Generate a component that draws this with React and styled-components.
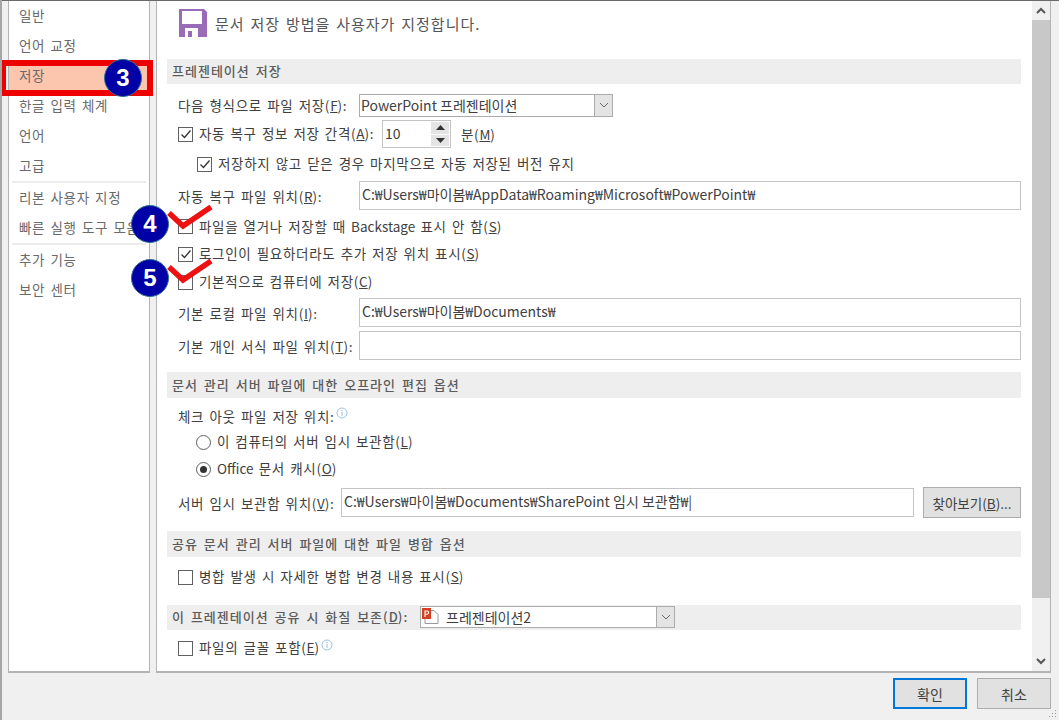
import React from 'react';
import styled, { createGlobalStyle } from 'styled-components';

const GlobalStyle = createGlobalStyle`
  html, body {
    margin: 0;
    padding: 0;
    background: #f0f0f0;
  }
  * {
    box-sizing: border-box;
  }
`;

const sideItems = [
  { label: '일반' },
  { label: '언어 교정' },
  { label: '저장', active: true },
  { label: '한글 입력 체계' },
  { label: '언어' },
  { label: '고급', divider: true },
  { label: '리본 사용자 지정' },
  { label: '빠른 실행 도구 모음', divider: true },
  { label: '추가 기능' },
  { label: '보안 센터' },
];

function Check() {
  return (
    <svg width="12" height="12" viewBox="0 0 12 12">
      <path d="M1.5 6.5 L4.5 9.5 L10.5 2.5" fill="none" stroke="#333" strokeWidth="1.3" />
    </svg>
  );
}

function Chevron({ up }) {
  return (
    <svg width="10" height="7" viewBox="0 0 10 7">
      <path
        d={up ? 'M1 6 L5 2 L9 6' : 'M1 1 L5 5 L9 1'}
        fill="none"
        stroke="#555"
        strokeWidth="2"
      />
    </svg>
  );
}

function SmallChevron() {
  return (
    <svg width="10" height="6" viewBox="0 0 10 6">
      <path d="M1 1 L5 5 L9 1" fill="none" stroke="#666" strokeWidth="1" />
    </svg>
  );
}

function Triangle({ up }) {
  return (
    <svg width="9" height="5" viewBox="0 0 9 5">
      <path d={up ? 'M0 5 L4.5 0 L9 5 Z' : 'M0 0 L4.5 5 L9 0 Z'} fill="#333" />
    </svg>
  );
}

function Info() {
  return (
    <InfoMark viewBox="0 0 12 12" width="12" height="12">
      <circle cx="6" cy="6" r="5" fill="none" stroke="#9cc3e6" strokeWidth="1" />
      <path d="M6 5 V9 M6 3 V4" stroke="#9cc3e6" strokeWidth="1" />
    </InfoMark>
  );
}

function DiskIcon() {
  return (
    <svg width="28" height="28" viewBox="0 0 28 28">
      <path d="M0 0 H25 L28 3 V28 H0 Z" fill="#9a6cb8" />
      <rect x="3" y="2" width="20" height="13" fill="#fff" />
      <rect x="6" y="19" width="13" height="9" fill="#fff" />
      <rect x="9" y="22" width="4" height="6" fill="#9a6cb8" />
    </svg>
  );
}

function PptIcon() {
  return (
    <svg width="17" height="17" viewBox="0 0 17 17">
      <path d="M3 2.5 H12 L16 6.5 V15.5 H3 Z" fill="#fff" stroke="#999" strokeWidth="1" />
      <rect x="0" y="0" width="9" height="11" fill="#d2401f" />
      <path d="M3 9 V3 H5 a1.5 1.5 0 0 1 0 3.2 H3" fill="none" stroke="#fff" strokeWidth="1.1" />
    </svg>
  );
}

function RedCheck({ top }) {
  return (
    <CheckMark $top={top} width="46" height="26" viewBox="0 0 46 26">
      <path d="M2 8 L16 21 L44 2" fill="none" stroke="#ee1111" strokeWidth="5.5" />
    </CheckMark>
  );
}

function Checkbox({ checked }) {
  return <Box>{checked && <Check />}</Box>;
}

function Key({ children }) {
  return <Under>{children}</Under>;
}

export default function App() {
  return (
    <Page>
      <GlobalStyle />
      <TopLine />
      <Panels>
        <SideList>
          {sideItems.map((item) => (
            <React.Fragment key={item.label}>
              <SideItem $active={item.active}>{item.label}</SideItem>
              {item.divider && <SideDivider />}
            </React.Fragment>
          ))}
        </SideList>

        <MainPanel>
          <Content>
            <Header>
              <DiskIcon />
              <HeaderText>문서 저장 방법을 사용자가 지정합니다.</HeaderText>
            </Header>

            <Section $top={0} $h={25}>프레젠테이션 저장</Section>
            <Group $top={8}>
              <Row $h={26}>
                <Label $w={181}>다음 형식으로 파일 저장(<Key>F</Key>):</Label>
                <Select $w={254}>
                  <SelectValue>PowerPoint 프레젠테이션</SelectValue>
                  <SelectArrow><SmallChevron /></SelectArrow>
                </Select>
              </Row>
              <Row $h={32}>
                <Checkbox checked />
                <CheckText $w={183}>자동 복구 정보 저장 간격(<Key>A</Key>):</CheckText>
                <Spin>
                  <SpinValue>10</SpinValue>
                  <SpinButtons>
                    <SpinButton><Triangle up /></SpinButton>
                    <SpinButton><Triangle /></SpinButton>
                  </SpinButtons>
                </Spin>
                <Minutes>분(<Key>M</Key>)</Minutes>
              </Row>
              <Row $h={28} $indent={19}>
                <Checkbox checked />
                <CheckText>저장하지 않고 닫은 경우 마지막으로 자동 저장된 버전 유지</CheckText>
              </Row>
              <Row $h={35}>
                <Label $w={181}>자동 복구 파일 위치(<Key>R</Key>):</Label>
                <Input>C:₩Users₩마이봄₩AppData₩Roaming₩Microsoft₩PowerPoint₩</Input>
              </Row>
              <Row $h={27}>
                <Checkbox />
                <CheckText>파일을 열거나 저장할 때 <Latin>Backstage</Latin> 표시 안 함(<Key>S</Key>)</CheckText>
              </Row>
              <Row $h={28}>
                <Checkbox checked />
                <CheckText>로그인이 필요하더라도 추가 저장 위치 표시(<Key>S</Key>)</CheckText>
              </Row>
              <Row $h={28}>
                <Checkbox />
                <CheckText>기본적으로 컴퓨터에 저장(<Key>C</Key>)</CheckText>
              </Row>
              <Row $h={33}>
                <Label $w={181}>기본 로컬 파일 위치(<Key>I</Key>):</Label>
                <Input>C:₩Users₩마이봄₩Documents₩</Input>
              </Row>
              <Row $h={33}>
                <Label $w={181}>기본 개인 서식 파일 위치(<Key>T</Key>):</Label>
                <Input />
              </Row>
            </Group>

            <Section $top={10} $h={26}>문서 관리 서버 파일에 대한 오프라인 편집 옵션</Section>
            <Group $top={5}>
              <Row $h={26}>
                <Label>체크 아웃 파일 저장 위치:</Label>
                <Info />
              </Row>
              <Row $h={26} $indent={18}>
                <Radio />
                <CheckText>이 컴퓨터의 서버 임시 보관함(<Key>L</Key>)</CheckText>
              </Row>
              <Row $h={28} $indent={18}>
                <Radio $on />
                <CheckText><Latin>Office</Latin> 문서 캐시(<Key>O</Key>)</CheckText>
              </Row>
              <Row $h={33} $top={3}>
                <Label $w={163}>서버 임시 보관함 위치(<Key>V</Key>):</Label>
                <Input>C:₩Users₩마이봄₩Documents₩SharePoint 임시 보관함₩|</Input>
                <BrowseButton>찾아보기(<Key>B</Key>)...</BrowseButton>
              </Row>
            </Group>

            <Section $top={12} $h={26}>공유 문서 관리 서버 파일에 대한 파일 병합 옵션</Section>
            <Group $top={6}>
              <Row $h={28}>
                <Checkbox />
                <CheckText>병합 발생 시 자세한 병합 변경 내용 표시(<Key>S</Key>)</CheckText>
              </Row>
            </Group>

            <Section $top={14} $h={25}>
              <SectionLabel>이 프레젠테이션 공유 시 화질 보존(<Key>D</Key>):</SectionLabel>
              <Select $w={255} $h={22}>
                <PptIcon />
                <SelectValue $gap={7}>프레젠테이션2</SelectValue>
                <SelectArrow><SmallChevron /></SelectArrow>
              </Select>
            </Section>
            <Group $top={4}>
              <Row $h={28}>
                <Checkbox />
                <CheckText>파일의 글꼴 포함(<Key>E</Key>)</CheckText>
                <Info />
              </Row>
            </Group>
          </Content>

          <ScrollBar>
            <ScrollArrow><Chevron up /></ScrollArrow>
            <ScrollThumb />
            <ScrollTrack />
            <ScrollArrow><Chevron /></ScrollArrow>
          </ScrollBar>
        </MainPanel>
      </Panels>

      <Footer>
        <DialogButton $primary>확인</DialogButton>
        <DialogButton>취소</DialogButton>
      </Footer>

      <RedFrame />
      <Badge $x={104} $y={59}>3</Badge>
      <Badge $x={131} $y={205}>4</Badge>
      <Badge $x={131} $y={259}>5</Badge>
      <RedCheck top={205} />
      <RedCheck top={259} />
      <Grip width="9" height="9" viewBox="0 0 9 9">
        <path
          d="M7 1 h1 v1 h-1 Z M4 4 h1 v1 h-1 Z M7 4 h1 v1 h-1 Z M1 7 h1 v1 h-1 Z M4 7 h1 v1 h-1 Z M7 7 h1 v1 h-1 Z"
          fill="#9a9a9a"
        />
      </Grip>
    </Page>
  );
}

const font = `"Noto Sans CJK KR", "Noto Sans", sans-serif`;

const Page = styled.div`
  position: relative;
  width: 1059px;
  height: 720px;
  overflow: hidden;
  background: #f0f0f0;
  border-left: 2px solid #a6a6a6;
  font-family: ${font};
  font-size: 13.5px;
  color: #404040;
`;

const TopLine = styled.div`
  height: 1px;
  background: #6a6a6a;
`;

const Panels = styled.div`
  display: flex;
  gap: 6px;
  height: 672px;
  padding-left: 6px;
  padding-right: 8px;
`;

const SideList = styled.div`
  width: 142px;
  flex: none;
  background: #fff;
  border: 1px solid #b4b4b4;
  border-top: none;
  border-bottom-width: 2px;
  overflow: hidden;
`;

const SideItem = styled.div`
  height: 30px;
  display: flex;
  align-items: center;
  padding: 0 0 3px 10px;
  white-space: nowrap;
  font-size: 13.5px;
  letter-spacing: 0.7px;
  word-spacing: 1.5px;
  color: #6a6a6a;
  background: ${(p) => (p.$active ? '#fcc6ae' : 'transparent')};
`;

const SideDivider = styled.div`
  height: 2px;
  margin: 0 3px;
  background: #ececec;
`;

const MainPanel = styled.div`
  flex: 1;
  display: flex;
  background: #fff;
  border: 1px solid #b4b4b4;
  border-top: none;
  border-bottom-width: 2px;
`;

const Content = styled.div`
  flex: 1;
  min-width: 0;
  padding: 0 11px 0 10px;
  overflow: hidden;
`;

const Header = styled.div`
  height: 59px;
  margin-top: -1px;
  display: flex;
  align-items: flex-start;
  padding: 9px 0 0 12px;
`;

const HeaderText = styled.div`
  margin: 4px 0 0 8px;
  font-size: 15px;
  letter-spacing: 1px;
  word-spacing: 1.5px;
  color: #555;
`;

const Section = styled.div`
  display: flex;
  align-items: center;
  height: ${(p) => p.$h}px;
  margin-top: ${(p) => p.$top}px;
  padding: 0 0 2px 5px;
  background: #eeeeee;
  font-size: 13px;
  font-weight: 500;
  letter-spacing: 1px;
  word-spacing: 2px;
  color: #5c5c5c;
`;

const SectionLabel = styled.span`
  width: 248px;
  flex: none;
  white-space: nowrap;
`;

const Group = styled.div`
  margin-top: ${(p) => p.$top}px;
  padding-left: 11px;
`;

const Row = styled.div`
  display: flex;
  align-items: center;
  height: ${(p) => p.$h}px;
  margin-top: ${(p) => p.$top || 0}px;
  padding-left: ${(p) => p.$indent || 0}px;
`;

const Label = styled.span`
  flex: none;
  white-space: nowrap;
  letter-spacing: 0.7px;
  word-spacing: 1.5px;
  ${(p) => (p.$w ? `width: ${p.$w}px;` : '')}
`;

const CheckText = styled.span`
  flex: none;
  margin-left: 6px;
  padding-bottom: 2px;
  white-space: nowrap;
  letter-spacing: 0.7px;
  word-spacing: 1.5px;
  ${(p) => (p.$w ? `width: ${p.$w}px;` : '')}
`;

const Latin = styled.span`
  letter-spacing: 0;
`;

const Under = styled.span`
  letter-spacing: 0;
  text-decoration: underline;
`;

const Box = styled.span`
  flex: none;
  width: 15px;
  height: 15px;
  display: flex;
  align-items: center;
  justify-content: center;
  background: #fff;
  border: 1px solid #606060;
`;

const Radio = styled.span`
  flex: none;
  width: 15px;
  height: 15px;
  display: flex;
  align-items: center;
  justify-content: center;
  border: 1px solid #606060;
  border-radius: 50%;

  &::after {
    content: '';
    display: ${(p) => (p.$on ? 'block' : 'none')};
    width: 7px;
    height: 7px;
    border-radius: 50%;
    background: #333;
  }
`;

const Select = styled.div`
  display: flex;
  align-items: center;
  width: ${(p) => p.$w}px;
  height: ${(p) => p.$h || 23}px;
  background: #fff;
  border: 1px solid #ababab;
  padding-left: 1px;
`;

const SelectValue = styled.span`
  flex: 1;
  margin-left: ${(p) => p.$gap || 0}px;
  white-space: nowrap;
  font-size: 14px;
  font-weight: 400;
  letter-spacing: 0;
  word-spacing: 0;
  color: #404040;
`;

const SelectArrow = styled.span`
  flex: none;
  width: 18px;
  height: 100%;
  display: flex;
  align-items: center;
  justify-content: center;
  background: #e4e4e4;
  border-left: 1px solid #ababab;
`;

const Spin = styled.div`
  display: flex;
  flex: none;
  width: 69px;
  height: 28px;
  padding: 1px;
  background: #fff;
  border: 1px solid #c4c4c4;
`;

const SpinValue = styled.span`
  flex: 1;
  padding-left: 1px;
  font-size: 14px;
  line-height: 22px;
`;

const SpinButtons = styled.div`
  width: 18px;
  display: flex;
  flex-direction: column;
  gap: 1px;
`;

const SpinButton = styled.span`
  flex: 1;
  display: flex;
  align-items: center;
  justify-content: center;
  background: #e4e4e4;
`;

const Minutes = styled.span`
  margin-left: 10px;
  letter-spacing: 0.7px;
`;

const Input = styled.div`
  flex: 1;
  height: 29px;
  line-height: 25px;
  padding-left: 2px;
  white-space: nowrap;
  font-size: 14px;
  background: #fff;
  border: 1px solid #c4c4c4;
`;

const BrowseButton = styled.button`
  flex: none;
  width: 98px;
  height: 31px;
  margin-left: 9px;
  padding: 0;
  font-family: ${font};
  font-size: 13.5px;
  color: #404040;
  background: #e1e1e1;
  border: 1px solid #adadad;
`;

const InfoMark = styled.svg`
  flex: none;
  margin: 0 0 6px 1px;
`;

const ScrollBar = styled.div`
  width: 18px;
  flex: none;
  display: flex;
  flex-direction: column;
  background: #f0f0f0;
`;

const ScrollArrow = styled.div`
  height: 19px;
  flex: none;
  display: flex;
  align-items: center;
  justify-content: center;
`;

const ScrollThumb = styled.div`
  height: 578px;
  flex: none;
  background: #c8c8c8;
`;

const ScrollTrack = styled.div`
  flex: 1;
`;

const Footer = styled.div`
  display: flex;
  justify-content: flex-end;
  gap: 10px;
  padding: 5px 8px 0 0;
`;

const DialogButton = styled.button`
  width: 74px;
  height: 31px;
  padding: 0;
  font-family: ${font};
  font-size: 14px;
  color: #404040;
  background: #e1e1e1;
  border: ${(p) => (p.$primary ? '2px solid #0078d7' : '1px solid #adadad')};
`;

const RedFrame = styled.div`
  position: absolute;
  left: -2px;
  top: 60px;
  width: 153px;
  height: 36px;
  border: 6px solid #ee0000;
`;

const Badge = styled.div`
  position: absolute;
  left: ${(p) => p.$x - 2}px;
  top: ${(p) => p.$y}px;
  width: 38px;
  height: 38px;
  display: flex;
  align-items: center;
  justify-content: center;
  border-radius: 50%;
  background: #0000a6;
  border: 1px solid #2f6f90;
  font-family: "Liberation Sans", sans-serif;
  font-size: 24px;
  font-weight: 700;
  color: #fff;
`;

const CheckMark = styled.svg`
  position: absolute;
  left: 165px;
  top: ${(p) => p.$top}px;
`;

const Grip = styled.svg`
  position: absolute;
  right: 2px;
  bottom: 2px;
`;
